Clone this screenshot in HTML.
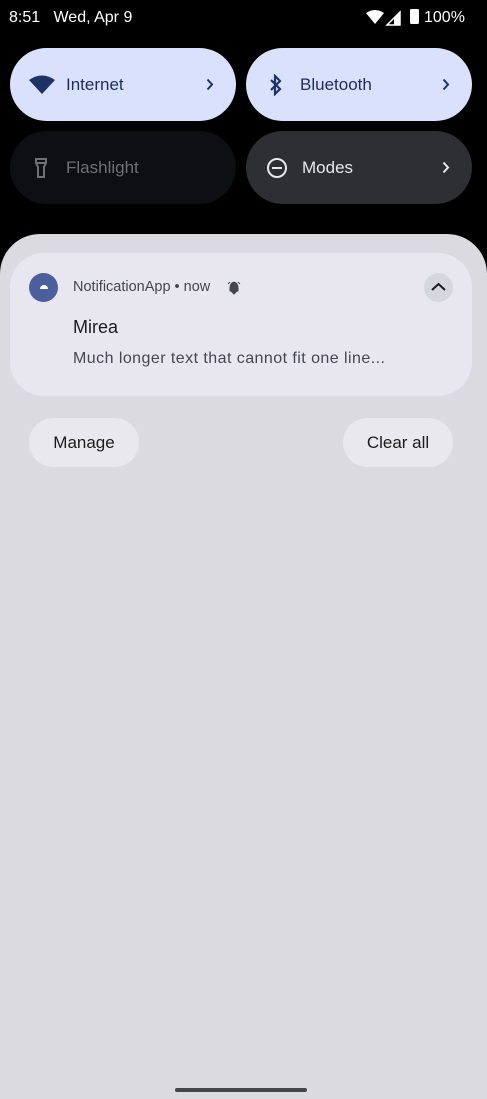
<!DOCTYPE html>
<html><head><style>
*{margin:0;padding:0;box-sizing:border-box}
body{width:487px;height:1099px;background:#000;font-family:"Liberation Sans",sans-serif;position:relative;overflow:hidden}
.a{position:absolute}
.tile{position:absolute;height:73px;width:226px;border-radius:37px;display:flex;align-items:center;font-size:17px}
.chev{position:absolute;right:22px;top:30px}
.shade{position:absolute;left:0;top:234px;width:487px;height:865px;background:#dbdae0;border-radius:40px 40px 0 0}
.btn{position:absolute;top:418px;height:49px;border-radius:25px;background:#e9e8ef;font-size:17px;color:#1b1b1f;display:flex;align-items:center;justify-content:center}
</style></head><body>
<div class="a" style="left:9px;top:9px;color:#fff;font-size:16px">8:51&nbsp;&nbsp;&nbsp;Wed, Apr 9</div>
<svg class="a" style="left:366px;top:10px" width="40" height="16" viewBox="0 0 40 16"><path d="M0 3 Q9 -3 18 3 L9 14Z" fill="#fff"/><path d="M34 2 L34 15 L21 15Z" fill="none" stroke="#fff" stroke-width="1.5"/><path d="M34 2 L34 15 L28 15 L28 8Z" fill="#fff"/></svg>
<div class="a" style="left:410px;top:9px;width:9px;height:15px;background:#fff;border-radius:1.5px"></div>
<div class="a" style="left:424px;top:9px;color:#fff;font-size:16px">100%</div>

<div class="tile" style="left:10px;top:48px;background:#d9e1fd;color:#1d2d5e">
<svg style="margin-left:19px" width="26" height="20" viewBox="0 0 26 20"><path d="M0 5 Q13 -4 26 5 L13 19Z" fill="#1d3366"/></svg>
<span style="margin-left:11px">Internet</span>
<svg class="chev" width="8" height="13" viewBox="0 0 8 13"><path d="M1.5 1.5 L6 6.5 L1.5 11.5" fill="none" stroke="#1d3366" stroke-width="2"/></svg></div>
<div class="tile" style="left:246px;top:48px;background:#d9e1fd;color:#1d2d5e">
<svg style="margin-left:22px" width="16" height="22" viewBox="0 0 16 22"><path d="M3 6 L12 15 L7 20 L7 2 L12 7 L3 16" fill="none" stroke="#1d3366" stroke-width="2.2"/></svg>
<span style="margin-left:16px">Bluetooth</span>
<svg class="chev" width="8" height="13" viewBox="0 0 8 13"><path d="M1.5 1.5 L6 6.5 L1.5 11.5" fill="none" stroke="#1d3366" stroke-width="2"/></svg></div>
<div class="tile" style="left:10px;top:131px;background:#0e0f13;color:#6f7076">
<svg style="margin-left:24px" width="14" height="22" viewBox="0 0 14 22"><path d="M2 2 H12 V6 L10 10 V20 H4 V10 L2 6Z M2 6 H12" fill="none" stroke="#6f7076" stroke-width="2"/></svg>
<span style="margin-left:18px">Flashlight</span></div>
<div class="tile" style="left:246px;top:131px;background:#2e2f33;color:#e7e7ec">
<svg style="margin-left:20px" width="22" height="22" viewBox="0 0 22 22"><circle cx="11" cy="11" r="9" fill="none" stroke="#e7e7ec" stroke-width="2"/><path d="M6 11 H16" stroke="#e7e7ec" stroke-width="2"/></svg>
<span style="margin-left:14px">Modes</span>
<svg class="chev" width="8" height="13" viewBox="0 0 8 13"><path d="M1.5 1.5 L6 6.5 L1.5 11.5" fill="none" stroke="#e7e7ec" stroke-width="2"/></svg></div>

<div class="shade"></div>
<div class="a" style="left:10px;top:253px;width:462px;height:143px;background:#e8e7ef;border-radius:34px"></div>
<div class="a" style="left:29px;top:273px;width:29px;height:29px;border-radius:50%;background:#4a5f9c"></div>
<div class="a" style="left:40px;top:285px;width:8px;height:4px;border-radius:4px 4px 0 0;background:#fff"></div>
<div class="a" style="left:73px;top:279px;font-size:14.5px;color:#45464f">NotificationApp • now</div>
<svg class="a" style="left:227px;top:281px" width="14" height="14" viewBox="0 0 14 14"><path d="M7 1 Q11 2 11 7 V10 H3 V7 Q3 2 7 1Z M5 11 H9 L7 13Z M1 3 L3 1 M13 3 L11 1" fill="#45464f" stroke="#45464f" stroke-width="1"/></svg>
<div class="a" style="left:424px;top:273px;width:29px;height:29px;border-radius:50%;background:#d6d6de"></div>
<svg class="a" style="left:430px;top:281px" width="17" height="12" viewBox="0 0 17 12"><path d="M2 9 L8.5 3 L15 9" fill="none" stroke="#1b1b1f" stroke-width="2"/></svg>
<div class="a" style="left:73px;top:317px;font-size:18px;color:#1b1b1f">Mirea</div>
<div class="a" style="left:73px;top:350px;font-size:16px;color:#45464f;letter-spacing:0.45px">Much longer text that cannot fit one line...</div>
<div class="btn" style="left:29px;width:110px">Manage</div>
<div class="btn" style="left:343px;width:110px">Clear all</div>
<div class="a" style="left:175px;top:1088px;width:132px;height:4px;border-radius:2px;background:#45464c"></div>
</body></html>
